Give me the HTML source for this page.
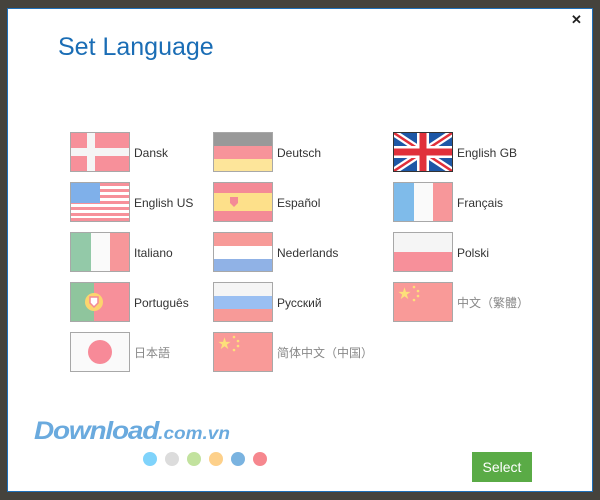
<!DOCTYPE html>
<html><head><meta charset="utf-8"><style>
body{margin:0;width:600px;height:500px;background:#45433d;position:relative;overflow:hidden;font-family:"Liberation Sans","Noto Sans CJK SC",sans-serif}
.dlg{position:absolute;left:7px;top:8px;width:584px;height:482px;background:#fff;border:1px solid #1e6fb8}
.t{position:absolute;left:50px;top:24px;font-size:25px;color:#1a6db5}
.x{position:absolute;left:563px;top:3px;font-size:13px;font-weight:bold;color:#222}
.f{position:absolute;width:58px;height:38px;border:1px solid #a8a8a8}
.f svg{display:block}
.l{position:absolute;font-size:12px;color:#333;line-height:14px}
.c{color:#888}
.dot{position:absolute;top:443px;width:14px;height:14px;border-radius:50%}
.logo{position:absolute;left:26px;top:406px;font-size:28px;font-weight:bold;font-style:italic;color:#6aaade;letter-spacing:-1.2px;transform:scaleY(0.9)}
.logo span{font-size:19px;letter-spacing:0}
.btn{position:absolute;left:464px;top:443px;width:60px;height:30px;background:#5aab46;color:#fff;font-size:14px;text-align:center;line-height:30px}
</style></head><body>
<div class="dlg">
<div class="t">Set Language</div>
<div class="x">✕</div>

<div class="f" style="left:62px;top:123px"><svg width="58" height="38"><rect width="58" height="38" fill="#f7909a"/><rect x="16" width="8" height="38" fill="#f5f5f5"/><rect y="15" width="58" height="8" fill="#f5f5f5"/></svg></div>
<div class="l" style="left:126px;top:137px">Dansk</div>

<div class="f" style="left:205px;top:123px"><svg width="58" height="38"><rect width="58" height="13" fill="#999"/><rect y="13" width="58" height="13" fill="#f7949a"/><rect y="26" width="58" height="12" fill="#fde59a"/></svg></div>
<div class="l" style="left:269px;top:137px">Deutsch</div>

<div class="f" style="left:385px;top:123px;border-color:#333"><svg width="58" height="38"><rect width="58" height="38" fill="#1d57a6"/><path d="M0 0L58 38M58 0L0 38" stroke="#fff" stroke-width="7"/><path d="M0 0L58 38M58 0L0 38" stroke="#e0303a" stroke-width="2.5"/><rect x="23" width="12" height="38" fill="#fff"/><rect y="13" width="58" height="12" fill="#fff"/><rect x="25.5" width="7" height="38" fill="#e0303a"/><rect y="15.5" width="58" height="7" fill="#e0303a"/></svg></div>
<div class="l" style="left:449px;top:137px">English GB</div>

<div class="f" style="left:62px;top:173px"><svg width="58" height="38"><rect width="58" height="38" fill="#fff"/><g fill="#f7909a"><rect y="0" width="58" height="3"/><rect y="6" width="58" height="3"/><rect y="12" width="58" height="3"/><rect y="18" width="58" height="3"/><rect y="24" width="58" height="3"/><rect y="30" width="58" height="3"/><rect y="35" width="58" height="3"/></g><rect width="29" height="20" fill="#7fb0ea"/></svg></div>
<div class="l" style="left:126px;top:187px">English US</div>

<div class="f" style="left:205px;top:173px"><svg width="58" height="38"><rect width="58" height="38" fill="#f48a96"/><rect y="10" width="58" height="18" fill="#fde08a"/><path d="M16 14h8v6l-4 4-4-4z" fill="#f48a96"/></svg></div>
<div class="l" style="left:269px;top:187px">Español</div>

<div class="f" style="left:385px;top:173px"><svg width="58" height="38"><rect width="20" height="38" fill="#7fbbea"/><rect x="20" width="19" height="38" fill="#fafafa"/><rect x="39" width="19" height="38" fill="#f7979a"/></svg></div>
<div class="l" style="left:449px;top:187px">Français</div>

<div class="f" style="left:62px;top:223px"><svg width="58" height="38"><rect width="20" height="38" fill="#93c9a8"/><rect x="20" width="19" height="38" fill="#fafafa"/><rect x="39" width="19" height="38" fill="#f7979a"/></svg></div>
<div class="l" style="left:126px;top:237px">Italiano</div>

<div class="f" style="left:205px;top:223px"><svg width="58" height="38"><rect width="58" height="13" fill="#f79a98"/><rect y="13" width="58" height="13" fill="#fff"/><rect y="26" width="58" height="12" fill="#90b2e6"/></svg></div>
<div class="l" style="left:269px;top:237px">Nederlands</div>

<div class="f" style="left:385px;top:223px"><svg width="58" height="38"><rect width="58" height="19" fill="#f5f5f5"/><rect y="19" width="58" height="19" fill="#f7909a"/></svg></div>
<div class="l" style="left:449px;top:237px">Polski</div>

<div class="f" style="left:62px;top:273px"><svg width="58" height="38"><rect width="58" height="38" fill="#f7909a"/><rect width="23" height="38" fill="#8fc59d"/><circle cx="23" cy="19" r="9" fill="#fcd56e"/><path d="M19 14h8v6l-4 4-4-4z" fill="#fff" stroke="#f48a96" stroke-width="1.5"/></svg></div>
<div class="l" style="left:126px;top:287px">Português</div>

<div class="f" style="left:205px;top:273px"><svg width="58" height="38"><rect width="58" height="13" fill="#f5f5f5"/><rect y="13" width="58" height="13" fill="#9abff2"/><rect y="26" width="58" height="12" fill="#f79a98"/></svg></div>
<div class="l" style="left:269px;top:287px">Русский</div>

<div class="f" style="left:385px;top:273px"><svg width="58" height="38"><rect width="58" height="38" fill="#f99a98"/><text x="4" y="15" font-size="13" fill="#fde07a">★</text><g fill="#fde07a"><circle cx="20" cy="4" r="1.3"/><circle cx="24" cy="8" r="1.3"/><circle cx="24" cy="13" r="1.3"/><circle cx="20" cy="17" r="1.3"/></g></svg></div>
<div class="l c" style="left:449px;top:287px">中文（繁體）</div>

<div class="f" style="left:62px;top:323px"><svg width="58" height="38"><rect width="58" height="38" fill="#fafafa"/><circle cx="29" cy="19" r="12" fill="#f78a98"/></svg></div>
<div class="l c" style="left:126px;top:337px">日本語</div>

<div class="f" style="left:205px;top:323px"><svg width="58" height="38"><rect width="58" height="38" fill="#f99a98"/><text x="4" y="15" font-size="13" fill="#fde07a">★</text><g fill="#fde07a"><circle cx="20" cy="4" r="1.3"/><circle cx="24" cy="8" r="1.3"/><circle cx="24" cy="13" r="1.3"/><circle cx="20" cy="17" r="1.3"/></g></svg></div>
<div class="l c" style="left:269px;top:337px">简体中文（中国）</div>

<div class="logo">Download<span>.com.vn</span></div>
<div class="dot" style="left:135px;background:#7fd3fb"></div>
<div class="dot" style="left:157px;background:#dcdcdc"></div>
<div class="dot" style="left:179px;background:#c2e29e"></div>
<div class="dot" style="left:201px;background:#fdd08a"></div>
<div class="dot" style="left:223px;background:#7ab3e0"></div>
<div class="dot" style="left:245px;background:#f6878e"></div>
<div class="btn">Select</div>
</div>
</body></html>
